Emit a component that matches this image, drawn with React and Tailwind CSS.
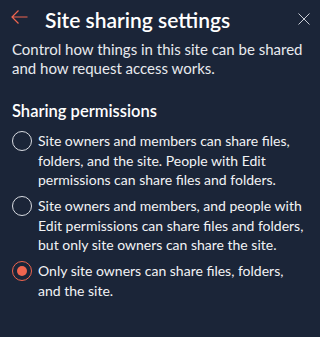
import React, { useState } from "react";

const options = [
    {
        id: "all",
        label: "Site owners and members can share files, folders, and the site. People with Edit permissions can share files and folders.",
    },
    {
        id: "members",
        label: "Site owners and members, and people with Edit permissions can share files and folders, but only site owners can share the site.",
    },
    {
        id: "owners",
        label: "Only site owners can share files, folders, and the site.",
    },
];

const App = () => {
    const [selected, setSelected] = useState("owners");

    return (
        <div className="w-[320px] h-[337px] bg-[#1b2538] text-white font-['Lato',sans-serif] overflow-hidden">
            {/* Header */}
            <div className="flex items-center h-[38px] pl-[11px] pr-[10px]">
                <button className="w-[17px] h-[14px] mb-[4px] flex items-center justify-center text-[#f0654f]">
                    <svg width="17" height="14" viewBox="0 0 17 14" fill="none" stroke="currentColor" strokeWidth="1.2">
                        <path d="M16.5 7H1M7.5 0.5L1 7l6.5 6.5" />
                    </svg>
                </button>
                <h1 className="ml-[17px] text-[21px] font-semibold leading-none">
                    Site sharing settings
                </h1>
                <button className="ml-auto mb-[1px] w-[12px] h-[12px] flex items-center justify-center text-[#c8ccd4]">
                    <svg width="12" height="12" viewBox="0 0 12 12" fill="none" stroke="currentColor" strokeWidth="1">
                        <path d="M0.5 0.5l11 11M11.5 0.5l-11 11" />
                    </svg>
                </button>
            </div>

            <div className="px-[12px]">
                <p className="text-[15px] leading-[19px] text-[#e8eaee] mt-[2px]">
                    Control how things in this site can be shared and how request access works.
                </p>

                <h2 className="mt-[22px] text-[16.5px] font-semibold leading-[22px]">
                    Sharing permissions
                </h2>

                <div className="mt-[9px] flex flex-col gap-[6.5px]">
                    {options.map((o) => (
                        <label
                            key={o.id}
                            className="flex items-start cursor-pointer"
                            onClick={() => setSelected(o.id)}
                        >
                            <span
                                className={
                                    selected === o.id
                                        ? "w-[20px] h-[20px] shrink-0 rounded-full border border-[#f0654f] flex items-center justify-center"
                                        : "w-[20px] h-[20px] shrink-0 rounded-full border border-[#d9dce2]"
                                }
                            >
                                {selected === o.id && (
                                    <span className="w-[10px] h-[10px] rounded-full bg-[#f0654f]" />
                                )}
                            </span>
                            <span className="ml-[6px] text-[14px] leading-[19.5px] text-[#f2f3f5]">
                                {o.label}
                            </span>
                        </label>
                    ))}
                </div>
            </div>
        </div>
    );
};

export default App;
